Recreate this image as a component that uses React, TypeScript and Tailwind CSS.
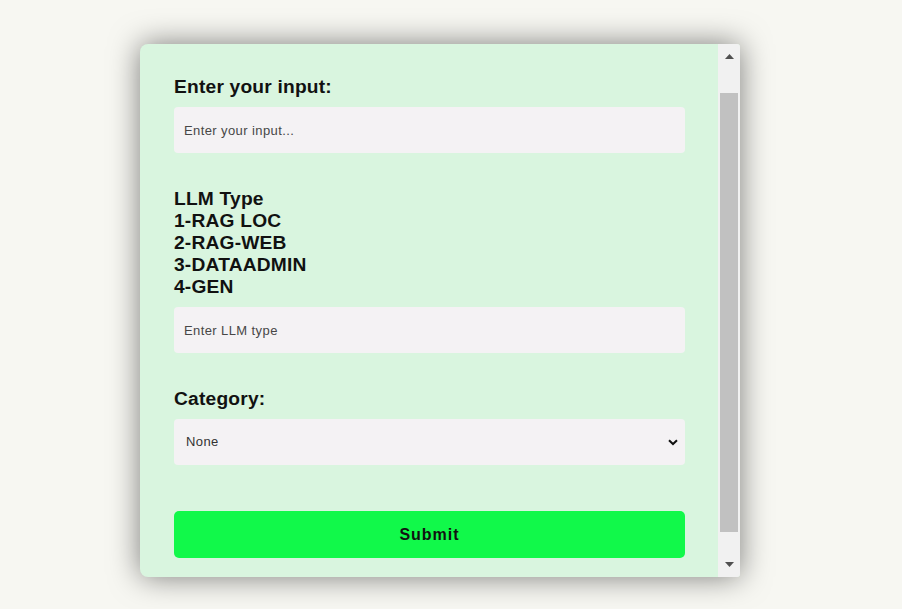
import { useEffect, useRef } from "react";

const fieldClass =
  "h-[46px] w-[511px] rounded bg-[#f4f2f4] px-[10px] text-[13px] tracking-[0.4px] outline-none placeholder:text-[#474747]";
const labelClass =
  "mb-[9px] text-[19.2px] font-bold leading-[22px] tracking-[0.2px]";

export default function App() {
  const scrollRef = useRef<HTMLDivElement>(null);

  // the form is shown scrolled a little way down
  useEffect(() => {
    if (scrollRef.current) scrollRef.current.scrollTop = 39;
  }, []);

  return (
    <div className="min-h-screen bg-[#f7f7f2] pl-[140px] pt-[44px] font-['Liberation_Sans',Arial,sans-serif] text-[#111]">
      <div className="flex h-[533px] w-[600px] overflow-hidden rounded-l-lg rounded-r-[3px] bg-[#d9f5df] shadow-[0_0_30px_rgba(0,0,0,0.5)]">
        <div
          ref={scrollRef}
          className="flex-1 overflow-y-auto [scrollbar-width:none]"
        >
          <form
            className="flex flex-col pb-[54px] pl-[34px] pt-[71px]"
            onSubmit={(e) => e.preventDefault()}
          >
            <label className={labelClass}>Enter your input:</label>
            <input
              type="text"
              placeholder="Enter your input..."
              className={fieldClass}
            />

            <label className={`${labelClass} mt-[35px]`}>
              LLM Type
              <br />
              1-RAG LOC
              <br />
              2-RAG-WEB
              <br />
              3-DATAADMIN
              <br />
              4-GEN
            </label>
            <input
              type="text"
              placeholder="Enter LLM type"
              className={fieldClass}
            />

            <label className={`${labelClass} mt-[35px]`}>Category:</label>
            <div className="relative w-[511px]">
              <select className="h-[46px] w-full appearance-none rounded bg-[#f4f2f4] pl-[12px] pr-[30px] text-[13px] tracking-[0.4px] text-[#333] outline-none">
                <option>None</option>
              </select>
              <svg
                viewBox="0 0 10 7"
                className="pointer-events-none absolute right-[7px] top-[20px] h-[7px] w-[10px]"
              >
                <path
                  d="M1 1.2 L5 5 L9 1.2"
                  fill="none"
                  stroke="#111"
                  strokeWidth="2"
                />
              </svg>
            </div>

            <button
              type="submit"
              className="mt-[46px] h-[47px] w-[511px] rounded-[5px] bg-[#11f94a] text-[16px] font-bold tracking-[1px] text-[#111]"
            >
              Submit
            </button>
          </form>
        </div>

        {/* scrollbar */}
        <div className="flex w-[22px] flex-col bg-[#f1f1f1]">
          <div className="flex h-[17px] items-end justify-center pb-[2px]">
            <svg viewBox="0 0 9 5" className="h-[5px] w-[9px]">
              <path d="M4.5 0 L9 5 L0 5 Z" fill="#505050" />
            </svg>
          </div>
          <div className="flex-1 px-[2px] pt-[32px]">
            <div className="h-[439px] bg-[#c1c1c1]" />
          </div>
          <div className="flex h-[17px] items-start justify-center pt-[2px]">
            <svg viewBox="0 0 9 5" className="h-[5px] w-[9px]">
              <path d="M0 0 L9 0 L4.5 5 Z" fill="#505050" />
            </svg>
          </div>
        </div>
      </div>
    </div>
  );
}
